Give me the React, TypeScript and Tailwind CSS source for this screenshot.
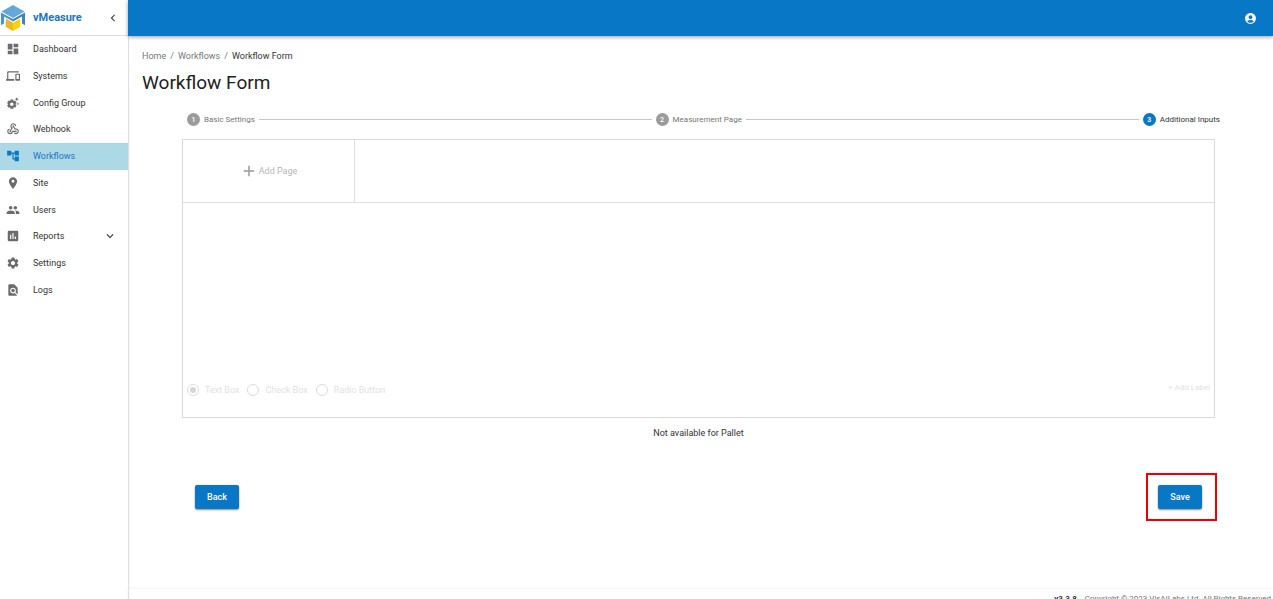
import React from "react";
import {
    MdAccountCircle,
    MdAccountTree,
    MdAdd,
    MdAssessment,
    MdChevronLeft,
    MdDashboard,
    MdDevices,
    MdExpandMore,
    MdFindInPage,
    MdPeople,
    MdPlace,
    MdSettings,
    MdSettingsSuggest,
    MdWebhook,
} from "react-icons/md";
import type {IconType} from "react-icons";
import clsx from "clsx";

interface NavItem {
    label: string;
    icon: IconType;
    active?: boolean;
    expandable?: boolean;
}

const navItems: NavItem[] = [
    {label: "Dashboard", icon: MdDashboard},
    {label: "Systems", icon: MdDevices},
    {label: "Config Group", icon: MdSettingsSuggest},
    {label: "Webhook", icon: MdWebhook},
    {label: "Workflows", icon: MdAccountTree, active: true},
    {label: "Site", icon: MdPlace},
    {label: "Users", icon: MdPeople},
    {label: "Reports", icon: MdAssessment, expandable: true},
    {label: "Settings", icon: MdSettings},
    {label: "Logs", icon: MdFindInPage},
];

const steps = ["Basic Settings", "Measurement Page", "Additional Inputs"];
const inputTypes = ["Text Box", "Check Box", "Radio Button"];

const Logo: React.FC = () => (
    <svg viewBox="0 0 24 26" className="h-[26px] w-6 shrink-0" aria-hidden="true">
        <path d="M12 0 L23.5 6.4 L12 13 L0.5 6.4 Z" fill="#62a8dd"/>
        <path d="M0 7.4 L12 14 V16.6 L3 11.4 V18.4 L0 20.2 Z" fill="#4a93d0"/>
        <path d="M24 7.4 L12 14 V16.6 L21 11.4 V18.4 L24 20.2 Z" fill="#3c82c4"/>
        <path d="M4.8 13.6 L12 17.8 V26 L4.8 22 Z" fill="#ebba22"/>
        <path d="M19.2 13.6 L12 17.8 V26 L19.2 22 Z" fill="#ffd10a"/>
    </svg>
);

const Sidebar: React.FC = () => (
    <aside className="w-32 shrink-0 bg-white shadow-[1px_0_1px_rgba(0,0,0,0.12)]">
        <div className="flex h-9 items-center border-b border-[#dedede] pl-px pr-2">
            <Logo/>
            <a href="#" className="ml-2 flex-1 text-[11px] font-bold text-[#1976c5]">vMeasure</a>
            <button type="button" aria-label="Collapse menu" className="text-[#444]">
                <MdChevronLeft className="size-[14px]"/>
            </button>
        </div>
        <nav className="flex h-[267px] flex-col">
            {navItems.map(({label, icon: Icon, active, expandable}) => (
                <a
                    key={label}
                    href="#"
                    className={clsx(
                        "flex flex-1 items-center pl-[6px] pr-[11px]",
                        active ? "bg-[#add8e6] text-[#1976c5]" : "text-[#333]"
                    )}
                >
                    <Icon className={clsx("size-[14px] shrink-0", active ? "text-[#0877c5]" : "text-[#6b6b6b]")}/>
                    <span className="ml-[13px] flex-1">{label}</span>
                    {expandable && <MdExpandMore className="size-[14px]"/>}
                </a>
            ))}
        </nav>
    </aside>
);

const Stepper: React.FC = () => (
    <ol className="ml-[5px] -mr-[5px] flex items-center gap-1 text-[8px] leading-3">
        {steps.map((step, index) => {
            const current = index === steps.length - 1;
            return (
                <React.Fragment key={step}>
                    {index !== 0 && <li aria-hidden="true" className="h-px flex-1 bg-[#c8c8c8]"/>}
                    <li className={clsx("flex items-center gap-1", current ? "text-[#333]" : "text-[#777]")}>
                        <span
                            className={clsx(
                                "flex size-[13px] items-center justify-center rounded-full text-[7px] font-medium text-white",
                                current ? "bg-[#0877c5]" : "bg-[#9b9b9b]"
                            )}
                        >
                            {index + 1}
                        </span>
                        {step}
                    </li>
                </React.Fragment>
            );
        })}
    </ol>
);

const PagePanel: React.FC = () => (
    <section className="mt-[13px] border border-[#d9d9d9]">
        <div className="flex h-[63px] border-b border-[#dfdfdf]">
            <button
                type="button"
                disabled
                className="flex w-[172px] items-center justify-center gap-px border-r border-[#dfdfdf] text-[#b5b5b5]"
            >
                <MdAdd className="size-[18px] text-[#999]"/>
                Add Page
            </button>
        </div>
        <div className="flex h-[214px] items-end justify-between pb-[21px] pl-1 pr-1 text-[#e2e2e2]">
            <fieldset disabled className="flex gap-2">
                {inputTypes.map((type, index) => (
                    <label key={type} className="flex items-center gap-[6px]">
                        <input
                            type="radio"
                            name="inputType"
                            defaultChecked={index === 0}
                            className="size-3 appearance-none rounded-full border border-[#dcdcdc] bg-clip-content p-[2px] checked:bg-[#d6d6d6]"
                        />
                        {type}
                    </label>
                ))}
            </fieldset>
            <button type="button" disabled className="mb-[2px] text-[8px] leading-3">+ Add Label</button>
        </div>
    </section>
);

interface FormButtonProps {
    text: string;
}

const FormButton: React.FC<FormButtonProps> = ({text}) => (
    <button
        type="button"
        className="h-6 w-11 rounded-[2px] bg-[#0877c5] font-medium text-white shadow-[0_1px_2px_rgba(0,0,0,0.45)]"
    >
        {text}
    </button>
);

export default function App() {
    return (
        <div className="h-screen overflow-hidden bg-white font-[Roboto,sans-serif] text-[9px] leading-3 text-[#333]">
            <div className="flex h-[calc(100vh+10px)]">
                <Sidebar/>
                <div className="flex min-w-0 flex-1 flex-col">
                    <header className="flex h-9 shrink-0 items-center justify-end bg-[#0877c5] pr-4 shadow-[0_1px_4px_rgba(0,0,0,0.4)]">
                        <button type="button" aria-label="Account" className="text-white">
                            <MdAccountCircle className="size-[13px]"/>
                        </button>
                    </header>
                    <main className="flex-1 pl-[14px] pt-[14px]">
                        <nav aria-label="Breadcrumb" className="flex gap-1 text-[#777]">
                            <a href="#">Home</a>
                            <span>/</span>
                            <a href="#">Workflows</a>
                            <span>/</span>
                            <span className="text-[#333]">Workflow Form</span>
                        </nav>
                        <h1 className="mt-[7px] text-[19px] leading-7 text-[#222]">Workflow Form</h1>
                        <div className="ml-10 mr-[58px] mt-4">
                            <Stepper/>
                            <PagePanel/>
                            <p className="mt-[9px] text-center">Not available for Pallet</p>
                            <div className="-mr-[2px] ml-[13px] mt-[34px] flex items-center justify-between">
                                <FormButton text="Back"/>
                                <div className="border-2 border-[#f00000] py-[10px] pl-[10px] pr-[13px]">
                                    <FormButton text="Save"/>
                                </div>
                            </div>
                        </div>
                    </main>
                    <footer className="flex h-5 shrink-0 items-center justify-end gap-2 pr-[2px] text-[8px] text-[#777] shadow-[0_-1px_3px_rgba(0,0,0,0.06)]">
                        <b className="text-[#333]">v3.3.8</b>
                        <span>Copyright © 2023 VisAILabs Ltd. All Rights Reserved</span>
                    </footer>
                </div>
            </div>
        </div>
    );
}
